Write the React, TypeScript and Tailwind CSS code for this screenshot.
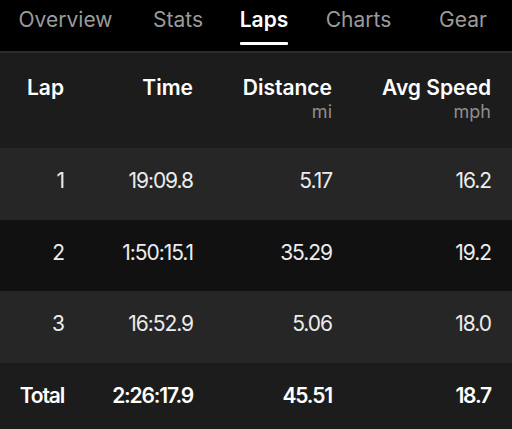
import React from "react";

const tabs = [
  { label: "Overview", w: "w-[131px]" },
  { label: "Stats", w: "w-[94px]" },
  { label: "Laps", w: "w-[78px]", active: true },
  { label: "Charts", w: "w-[111px]" },
  { label: "Gear", w: "w-[98px]" },
];

const rows = [
  { lap: "1", time: "19:09.8", dist: "5.17", speed: "16.2", bg: "bg-[#262626]", h: "h-[72px]" },
  { lap: "2", time: "1:50:15.1", dist: "35.29", speed: "19.2", bg: "bg-[#111111]", h: "h-[71px]" },
  { lap: "3", time: "16:52.9", dist: "5.06", speed: "18.0", bg: "bg-[#262626]", h: "h-[72px]" },
];

const grid = "grid grid-cols-[64px_129px_139px_159px] pr-[21px] text-right";

export default function App() {
  return (
    <div
      className="w-[512px] h-[429px] overflow-hidden bg-black text-[#ececec] antialiased"
      style={{ fontFamily: "Inter, 'Noto Sans', sans-serif" }}
    >
      <div className="flex h-[51px] bg-black">
        {tabs.map((t) => (
          <div key={t.label} className={`${t.w} flex justify-center`}>
            <div className="relative pt-[7px] text-[21px] leading-[26px]">
              <span className={t.active ? "font-semibold text-white" : "text-[#9b9b9b]"}>
                {t.label}
              </span>
              {t.active && (
                <div className="absolute left-0 right-0 top-[42px] h-[3px] bg-white rounded-[1px]" />
              )}
            </div>
          </div>
        ))}
      </div>
      <div className="h-[2px] bg-[#2c2c2c]" />
      <div className={`${grid} bg-[#1c1c1c] pt-[22px] pb-[25px] h-[95px] text-white`}>
        <div className="text-[21px] leading-[26px] font-semibold">Lap</div>
        <div className="text-[21px] leading-[26px] font-semibold">Time</div>
        <div>
          <div className="text-[21px] leading-[26px] font-semibold">Distance</div>
          <div className="text-[18px] leading-[22px] text-[#8e8e8e]">mi</div>
        </div>
        <div>
          <div className="text-[21px] leading-[26px] font-semibold">Avg Speed</div>
          <div className="text-[18px] leading-[22px] text-[#8e8e8e]">mph</div>
        </div>
      </div>
      {rows.map((r) => (
        <div
          key={r.lap}
          className={`${grid} ${r.bg} ${r.h} pt-[20px] text-[21px] leading-[26px] tracking-[-0.05em]`}
        >
          <div>{r.lap}</div>
          <div>{r.time}</div>
          <div>{r.dist}</div>
          <div>{r.speed}</div>
        </div>
      ))}
      <div
        className={`${grid} bg-[#1c1c1c] h-[66px] pt-[20px] text-[21px] leading-[26px] font-semibold tracking-[-0.055em] text-white`}
      >
        <div>Total</div>
        <div>2:26:17.9</div>
        <div>45.51</div>
        <div>18.7</div>
      </div>
    </div>
  );
}
